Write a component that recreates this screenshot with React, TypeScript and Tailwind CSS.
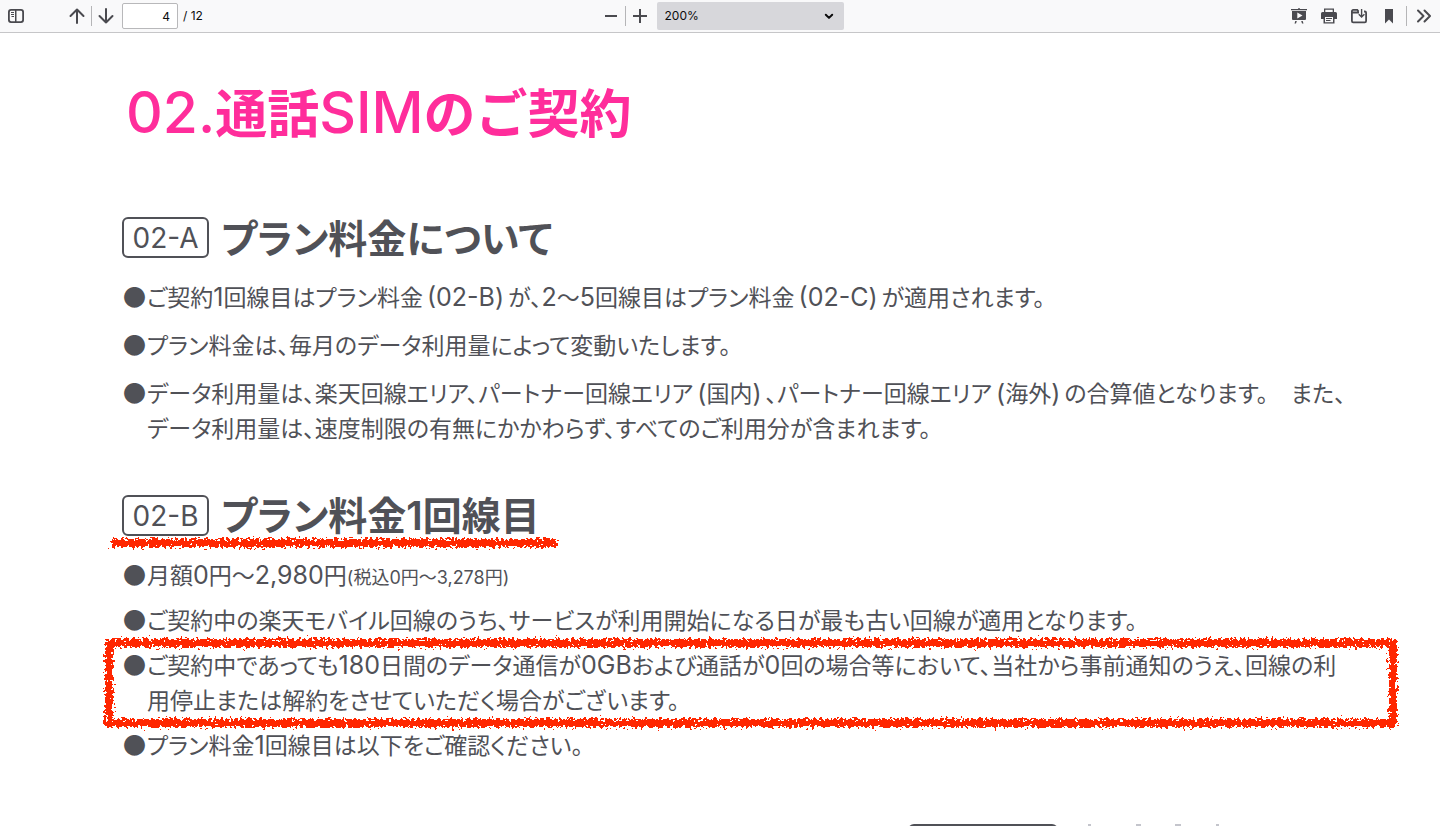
import type { ReactNode } from "react"

const termsA = [
  ["ご契約1回線目はプラン料金(02-B)が、2〜5回線目はプラン料金(02-C)が適用されます。"],
  ["プラン料金は、毎月のデータ利用量によって変動いたします。"],
  [
    "データ利用量は、楽天回線エリア、パートナー回線エリア(国内)、パートナー回線エリア(海外)の合算値となります。　また、",
    "データ利用量は、速度制限の有無にかかわらず、すべてのご利用分が含まれます。",
  ],
]

const latin = /([0-9A-Za-z.,()-]+)/

// latin runs are set a little larger than the kanji around them
function Mixed({ text, className }: { text: string; className: string }) {
  return (
    <>
      {text.split(latin).map((part, i) =>
        i % 2 ? (
          <span
            key={i}
            className={`${className} ${part.startsWith("(") ? "ml-1" : ""} ${part.endsWith(")") ? "mr-1" : ""}`}
          >
            {part}
          </span>
        ) : (
          part
        ),
      )}
    </>
  )
}

function IconButton({ label, children }: { label: string; children: ReactNode }) {
  return (
    <button
      type="button"
      aria-label={label}
      className="flex h-7 w-7 shrink-0 items-center justify-center rounded-xs text-[#4a4a4f] hover:bg-[#dddddf]"
    >
      <svg viewBox="0 0 16 16" className="h-4 w-4" fill="currentColor">
        {children}
      </svg>
    </button>
  )
}

function Separator({ className = "" }: { className?: string }) {
  return <span className={`h-5 w-px shrink-0 bg-[#b5b5b7] ${className}`} />
}

function Toolbar() {
  return (
    <header className="grid h-[33px] shrink-0 grid-cols-[1fr_auto_1fr] items-center border-b border-[#c6c6c8] bg-[#f9f9fa] px-0.5 font-[Inter,sans-serif] text-xs text-[#0c0c0d]">
      <div className="flex items-center">
        <IconButton label="Toggle Sidebar">
          <path
            fillRule="evenodd"
            d="M3 1h10a3 3 0 0 1 3 3v8a3 3 0 0 1-3 3H3a3 3 0 0 1-3-3V4a3 3 0 0 1 3-3zm.2 1.800A1.400 1.400 0 0 0 1.800 4.200v7.600a1.400 1.400 0 0 0 1.400 1.400H7V2.800zm5.300 0v10.400h4.300a1.400 1.400 0 0 0 1.400-1.400V4.200a1.400 1.400 0 0 0-1.400-1.400z"
          />
          <path d="M3 4h3v1H3zM3 6h3v1H3zM3.500 8H6v1H3.500z" />
        </IconButton>
        <div className="ml-[33px] flex items-center">
          <IconButton label="Previous Page">
            <path
              d="M8 15V1.500M1.500 8L8 1.500L14.500 8"
              fill="none"
              stroke="currentColor"
              strokeWidth="2"
              strokeLinecap="round"
              strokeLinejoin="round"
            />
          </IconButton>
          <Separator />
          <IconButton label="Next Page">
            <path
              d="M8 1V14.500M1.500 8L8 14.500L14.500 8"
              fill="none"
              stroke="currentColor"
              strokeWidth="2"
              strokeLinecap="round"
              strokeLinejoin="round"
            />
          </IconButton>
        </div>
        <input
          aria-label="Page"
          defaultValue="4"
          className="ml-0.5 h-[26px] w-14 rounded-xs border border-[#b8b8ba] bg-white px-[7px] text-right"
        />
        <span className="ml-[5px]">/ 12</span>
      </div>

      <div className="flex items-center">
        <IconButton label="Zoom Out">
          <path d="M2 7h12v2H2z" />
        </IconButton>
        <Separator />
        <IconButton label="Zoom In">
          <path d="M7 1h2v6h6v2H9v6H7V9H1V7h6z" />
        </IconButton>
        <div className="relative ml-[3px]">
          <select
            aria-label="Zoom"
            defaultValue="200"
            className="block h-7 w-[187px] appearance-none rounded-xs bg-[#d7d7db] pl-2"
          >
            <option value="100">100%</option>
            <option value="200">200%</option>
          </select>
          <svg
            viewBox="0 0 10 10"
            className="pointer-events-none absolute top-[9px] right-2.5 h-2.5 w-2.5"
            fill="none"
            stroke="#0c0c0d"
            strokeWidth="2"
            strokeLinecap="round"
            strokeLinejoin="round"
          >
            <path d="M1.800 3.700L5 6.900L8.200 3.700" />
          </svg>
        </div>
      </div>

      <div className="flex items-center justify-end gap-0.5">
        <IconButton label="Presentation Mode">
          <path d="M7.300 0h1.400v1H16v1.300H0V1h7.300z" />
          <path fillRule="evenodd" d="M1 3h14v8a1 1 0 0 1-1 1H2a1 1 0 0 1-1-1zm5.300 1.500v6L11.500 7.500z" />
          <path d="M4.300 13h1.500l-.8 2.500H3.500zM10.200 13h1.500l.8 2.500H11z" />
        </IconButton>
        <IconButton label="Print">
          <path
            fillRule="evenodd"
            d="M3 .500h10V4h1.500A1.500 1.500 0 0 1 16 5.500V11h-2.500v4.500h-11V11H0V5.500A1.500 1.500 0 0 1 1.500 4H3zm1.300 1.200V4h7.400V1.700zM4 9v5.200h8V9z"
          />
          <path d="M5 10h6v1H5zM5 12h4.500v1H5z" />
        </IconButton>
        <IconButton label="Open File">
          <path
            d="M7.500 3.500L6.300 1.900H2.200A1.300 1.300 0 0 0 .900 3.200V13A1.300 1.300 0 0 0 2.200 14.300H13.800A1.300 1.300 0 0 0 15.100 13V4.800A1.300 1.300 0 0 0 13.800 3.500H13M1 4.500H8"
            fill="none"
            stroke="currentColor"
            strokeWidth="1.800"
          />
          <path d="M9.900 1h1.400v6.300L13 5.700l.9 1L10.600 10L7.300 6.700l.9-1 1.700 1.600z" />
        </IconButton>
        <IconButton label="Current View">
          <path d="M4 1h8v14.500l-4-4-4 4z" />
        </IconButton>
        <Separator className="mx-px" />
        <IconButton label="Tools">
          <path
            d="M2 2.500L7.500 8L2 13.500M8.500 2.500L14 8L8.500 13.500"
            fill="none"
            stroke="currentColor"
            strokeWidth="2"
            strokeLinecap="round"
            strokeLinejoin="round"
          />
        </IconButton>
      </div>
    </header>
  )
}

function SectionHeading({ code, title }: { code: string; title: string }) {
  return (
    <h2 className="flex items-center gap-3">
      <span className="flex h-[41px] w-[87px] items-center justify-center rounded-md border-2 border-[#505157] font-[Inter,sans-serif] text-[28px] font-normal">
        {code}
      </span>
      <span className="pb-0.5 text-[39px] leading-[39px] font-bold whitespace-nowrap">
        <Mixed text={title} className="font-[Inter,sans-serif] font-semibold" />
      </span>
    </h2>
  )
}

function Term({ lines, children }: { lines: string[]; children?: ReactNode }) {
  return (
    <li className="relative flex">
      <span className="w-6 shrink-0">●</span>
      <p className="whitespace-nowrap">
        {lines.map((line) => (
          <span key={line} className="block h-[35px]">
            <Mixed text={line} className="font-[Inter,sans-serif] text-[25px]" />
          </span>
        ))}
      </p>
      {children}
    </li>
  )
}

export default function App() {
  return (
    <div className="flex h-screen flex-col overflow-hidden bg-white">
      <Toolbar />

      <svg className="absolute h-0 w-0" aria-hidden="true">
        <filter
          id="crayon"
          filterUnits="userSpaceOnUse"
          x="-20"
          y="-20"
          width="1600"
          height="200"
          colorInterpolationFilters="sRGB"
        >
          <feTurbulence type="fractalNoise" baseFrequency="0.35" numOctaves="2" seed="4" result="noise" />
          <feDisplacementMap in="SourceGraphic" in2="noise" scale="11" xChannelSelector="R" yChannelSelector="G" />
          <feGaussianBlur stdDeviation="0.5" />
        </filter>
      </svg>

      <main className="min-h-0 flex-1 overflow-hidden pt-11 pl-[122px] font-['Noto_Sans_CJK_JP',sans-serif] text-[#505157] [font-feature-settings:'palt']">
        <h1 className="pl-1 text-[52px] leading-[68px] font-bold text-[#ff2d9b] [font-feature-settings:normal]">
          <Mixed text="02.通話SIMのご契約" className="font-[Inter,sans-serif] text-[57px] font-medium" />
        </h1>

        <section className="mt-[70px]">
          <SectionHeading code="02-A" title="プラン料金について" />
          <ul className="mt-[21px] flex flex-col gap-[13px] pl-px text-[23px] leading-[35px]">
            {termsA.map((lines) => (
              <Term key={lines[0]} lines={lines} />
            ))}
          </ul>
        </section>

        <section className="mt-[49px]">
          <div className="relative">
            <SectionHeading code="02-B" title="プラン料金1回線目" />
            <svg className="absolute top-[43px] -left-3 h-3 w-[448px] overflow-visible" aria-hidden="true">
              <path d="M1 6H447" stroke="#ff2600" strokeWidth="8" filter="url(#crayon)" />
            </svg>
          </div>
          <ul className="mt-5 flex flex-col gap-2.5 pl-px text-[23px] leading-[35px]">
            <li className="flex h-[35px]">
              <span className="w-6 shrink-0">●</span>
              <p className="whitespace-nowrap">
                <Mixed text="月額0円〜2,980円" className="font-[Inter,sans-serif] text-[25px]" />
                <span className="font-[Inter,'Noto_Sans_CJK_JP',sans-serif] text-[18px]">(税込0円〜3,278円)</span>
              </p>
            </li>
            <Term lines={["ご契約中の楽天モバイル回線のうち、サービスが利用開始になる日が最も古い回線が適用となります。"]} />
            <Term
              lines={[
                "ご契約中であっても180日間のデータ通信が0GBおよび通話が0回の場合等において、当社から事前通知のうえ、回線の利",
                "用停止または解約をさせていただく場合がございます。",
              ]}
            >
              <svg className="absolute -top-1 -left-3.5 h-20 w-[1284px] overflow-visible" aria-hidden="true">
                <rect width="100%" height="100%" fill="none" stroke="#ff2600" strokeWidth="8" filter="url(#crayon)" />
              </svg>
            </Term>
            <Term lines={["プラン料金1回線目は以下をご確認ください。"]} />
          </ul>
        </section>

        {/* top edge of the next heading */}
        <div className="mt-[62px] ml-[786px] flex gap-[30px]">
          <div className="h-[41px] w-[150px] shrink-0 rounded-md border-2 border-[#505157]" />
          <svg className="h-1 w-[132px] shrink-0" aria-hidden="true">
            <path d="M0 0h3v2H0zM48 0h5v2h-5zM87 0h6v2h-6zM128 0h3v2h-3z" fill="#c4c5cc" />
          </svg>
        </div>
      </main>
    </div>
  )
}
